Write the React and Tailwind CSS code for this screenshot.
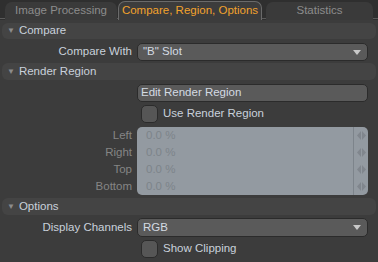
import React from 'react';

const font = { fontFamily: '"Liberation Sans", Arial, sans-serif' };

const Header = ({ title, h }) => (
  <div className={`mx-[2px] ${h} rounded-[6px] bg-[#444444] flex items-center pl-[5px]`}>
    <span className="text-[#8c8c8c] text-[8px] leading-none mr-[4px]">▼</span>
    <span className="text-[#c9d1db] text-[11.5px]">{title}</span>
  </div>
);

const Row = ({ label, children }) => (
  <div className="flex items-center">
    <div className="w-[137px] pr-[5px] text-right text-[11.5px] text-[#c9d1db] whitespace-nowrap">{label}</div>
    <div className="w-[231px]">{children}</div>
  </div>
);

const Dropdown = ({ value, h }) => (
  <div className={`${h} rounded-[5px] border border-[#2b2b2b] bg-[#5a5a5a] flex items-center justify-between pl-[5px] pr-[6px]`}>
    <span className="text-[#d4dbe3] text-[11.5px]">{value}</span>
    <svg width="8" height="5" viewBox="0 0 8 5"><path d="M0 0h8L4 5z" fill="#c8c8c8" /></svg>
  </div>
);

const Check = ({ label }) => (
  <div className="flex items-center h-[18px] pl-[141px]">
    <div className="w-[17px] h-[18px] rounded-[5px] border border-[#2b2b2b] bg-[#565656]" />
    <span className="ml-[5px] text-[#c9d1db] text-[11.5px]">{label}</span>
  </div>
);

const Spin = () => (
  <svg width="9" height="9" viewBox="0 0 9 9"><path d="M4 0v9L0 4.5z M5 0v9l4-4.5z" fill="#80868d" /></svg>
);

export default function App() {
  const fields = ['Left', 'Right', 'Top', 'Bottom'];
  return (
    <div className="w-[378px] h-[262px] bg-[#3c3c3c] overflow-hidden" style={font}>
      <div className="h-[20px] bg-[#2f2f2f] flex items-end pl-[5px] relative">
        <div className="absolute left-0 right-0 bottom-[1px] h-px bg-[#5a5a5a]" />
        <div className="relative w-[112px] h-[18px] rounded-t-[7px] bg-[#3a3a3a] flex items-center justify-center text-[11.5px] text-[#8c8c8c] whitespace-nowrap">Image Processing</div>
        <div className="relative ml-[1px] w-[144px] h-[19px] rounded-t-[7px] bg-[#3c3c3c] border border-b-0 border-[#6a6a6a] flex items-center justify-center text-[11.5px] text-[#f2a22c] whitespace-nowrap">Compare, Region, Options</div>
        <div className="relative ml-[4px] w-[107px] h-[18px] rounded-t-[7px] bg-[#3a3a3a] flex items-center justify-center text-[11.5px] text-[#8c8c8c] whitespace-nowrap">Statistics</div>
      </div>
      <div className="pt-[3px] flex flex-col">
        <Header title="Compare" h="h-[16px]" />
        <div className="mt-[4px]">
          <Row label="Compare With"><Dropdown value={'"B" Slot'} h="h-[18px]" /></Row>
        </div>
        <div className="mt-[2px]"><Header title="Render Region" h="h-[17px]" /></div>
        <div className="mt-[4px]">
          <Row label="">
            <div className="h-[18px] rounded-[5px] border border-[#2b2b2b] bg-[#5a5a5a] flex items-center pl-[3px] text-[11.5px] text-[#d4dbe3]">Edit Render Region</div>
          </Row>
        </div>
        <div className="mt-[3px]"><Check label="Use Render Region" /></div>
        <div className="mt-[4px] flex">
          <div className="w-[137px] pr-[5px] flex flex-col">
            {fields.map((f) => (
              <div key={f} className="h-[17px] flex items-center justify-end text-[11.5px] text-[#858585]">{f}</div>
            ))}
          </div>
          <div className="w-[231px] h-[68px] rounded-[5px] bg-[#939aa1] flex">
            <div className="flex-1 flex flex-col pl-[9px]">
              {fields.map((f) => (
                <div key={f} className="h-[17px] flex items-center text-[11.5px] text-[#7d848a]">0.0 %</div>
              ))}
            </div>
            <div className="w-[15px] border-l border-[#7d848b] flex flex-col items-center">
              {fields.map((f) => (
                <div key={f} className="h-[17px] flex items-center"><Spin /></div>
              ))}
            </div>
          </div>
        </div>
        <div className="mt-[3px]"><Header title="Options" h="h-[17px]" /></div>
        <div className="mt-[3px]">
          <Row label="Display Channels"><Dropdown value="RGB" h="h-[19px]" /></Row>
        </div>
        <div className="mt-[3px]"><Check label="Show Clipping" /></div>
      </div>
    </div>
  );
}
